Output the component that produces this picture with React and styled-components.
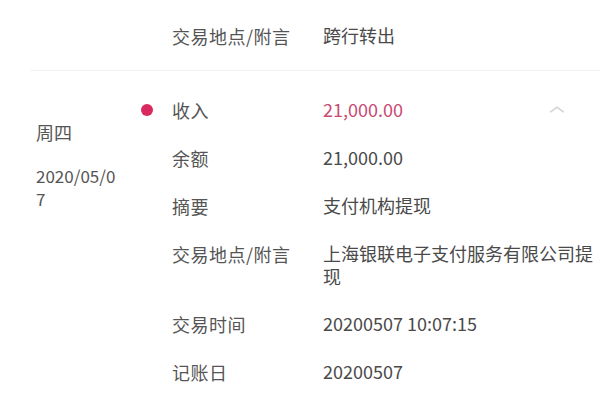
import React from 'react'
import styled, { createGlobalStyle } from 'styled-components'

const GlobalStyle = createGlobalStyle`
  html, body {
    margin: 0;
    padding: 0;
    background: #fff;
    overflow: hidden;
  }
  body {
    font-family: "Noto Sans CJK SC", "Noto Sans", sans-serif;
    color: #4a4a4a;
  }
`

const List = styled.div`
  margin-top: -24px;
`

const Item = styled.div`
  display: flex;
  padding: ${props => (props.first ? '0' : '27px')} 0 22px;
  margin-left: 30px;
  border-bottom: ${props => (props.last ? 'none' : '1px solid #f2f2f2')};
`

const DateCol = styled.div`
  width: 94px;
  padding-left: 6px;
  box-sizing: border-box;
  flex-shrink: 0;
`

const Weekday = styled.div`
  margin-top: 22px;
  font-size: 18px;
  line-height: 24px;
  color: #555;
`

const DateText = styled.div`
  margin-top: 20px;
  font-size: 17px;
  line-height: 23px;
  color: #555;
  word-break: break-all;
`

const Details = styled.div`
  flex: 1;
  display: flex;
  flex-direction: column;
  gap: 24px;
`

const Row = styled.div`
  display: grid;
  grid-template-columns: 48px 151px 1fr;
  align-items: start;
  font-size: 18px;
  line-height: 24px;
`

const DotCell = styled.div`
  height: 24px;
  display: flex;
  align-items: center;
`

const Dot = styled.span`
  width: 12px;
  height: 12px;
  margin-left: 17px;
  border-radius: 50%;
  background: #d9295f;
`

const Label = styled.div`
  color: #555;
  letter-spacing: 0.5px;
`

const Value = styled.div`
  color: ${props => (props.income ? '#c94a72' : '#4a4a4a')};
  display: flex;
  justify-content: space-between;
  align-items: flex-start;
  line-height: 23px;
  padding-right: 2px;
`

const Toggle = styled.span`
  display: flex;
  margin-right: 30px;
  margin-top: 1px;
`

const ChevronUp = () => (
  <svg width="22" height="22" viewBox="0 0 24 24" fill="none" stroke="#d6d6d6" strokeWidth="1.8" strokeLinecap="round" strokeLinejoin="round">
    <path d="M5 14l7-5 7 5" />
  </svg>
)

const prevRows = [
  { label: '记账日', value: '20200506' },
  { label: '交易地点/附言', value: '跨行转出' },
]

const rows = [
  { label: '收入', value: '21,000.00', income: true },
  { label: '余额', value: '21,000.00' },
  { label: '摘要', value: '支付机构提现' },
  { label: '交易地点/附言', value: '上海银联电子支付服务有限公司提现' },
  { label: '交易时间', value: '20200507 10:07:15' },
  { label: '记账日', value: '20200507' },
]

export default function App() {
  return (
    <>
      <GlobalStyle />
      <List>
        <Item first>
          <DateCol />
          <Details>
            {prevRows.map(row => (
              <Row key={row.label}>
                <DotCell />
                <Label>{row.label}</Label>
                <Value>{row.value}</Value>
              </Row>
            ))}
          </Details>
        </Item>
        <Item last>
          <DateCol>
            <Weekday>周四</Weekday>
            <DateText>2020/05/07</DateText>
          </DateCol>
          <Details>
            {rows.map((row, index) => (
              <Row key={row.label + index}>
                <DotCell>{row.income && <Dot />}</DotCell>
                <Label>{row.label}</Label>
                <Value income={row.income}>
                  <span>{row.value}</span>
                  {row.income && (
                    <Toggle>
                      <ChevronUp />
                    </Toggle>
                  )}
                </Value>
              </Row>
            ))}
          </Details>
        </Item>
      </List>
    </>
  )
}
